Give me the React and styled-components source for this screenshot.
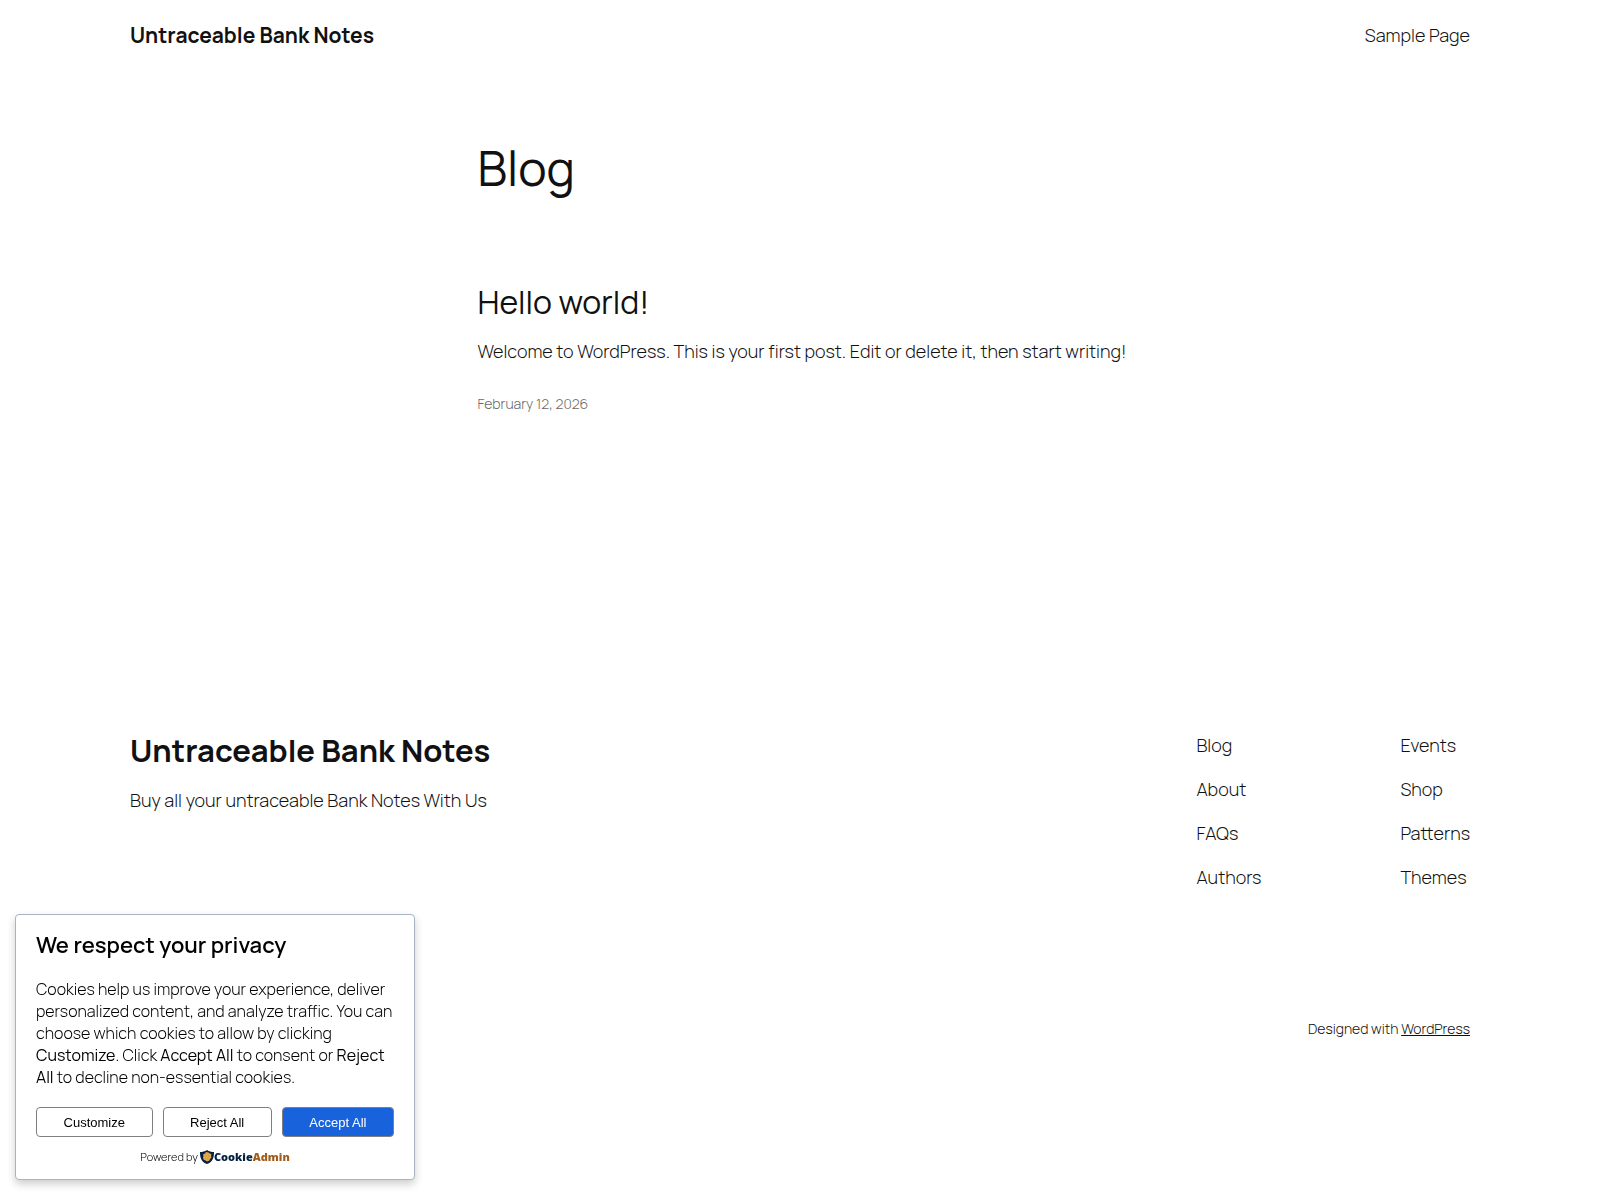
import styled, { createGlobalStyle } from 'styled-components';

const GlobalStyle = createGlobalStyle`
  * {
    box-sizing: border-box;
  }

  body {
    margin: 0;
    background: #fff;
    color: #111;
    font-family: Manrope, Inter, sans-serif;
    font-size: 18px;
    font-weight: 300;
    line-height: 26px;
  }

  h1, h2, h3, p, ul {
    margin: 0;
    padding: 0;
  }

  a {
    color: inherit;
    text-decoration: none;
  }
`;

const Wide = styled.div`
  width: 100%;
  max-width: 1440px;
  margin: 0 auto;
  padding: 0 50px;
`;

const HeaderRow = styled(Wide)`
  display: flex;
  align-items: center;
  justify-content: space-between;
  height: 70px;
`;

const SiteTitle = styled.p`
  font-size: 21px;
  font-weight: 700;
`;

const Main = styled.main`
  width: 100%;
  max-width: 645px;
  margin: 0 auto;
  padding: 70px 0 315px;
`;

const PageTitle = styled.h1`
  font-size: 48px;
  font-weight: 400;
  line-height: 56px;
`;

const Post = styled.article`
  padding-top: 88px;
`;

const PostTitle = styled.h2`
  font-size: 32px;
  font-weight: 400;
  line-height: 36px;
`;

const Excerpt = styled.p`
  margin: 18px -10px 0 0;
`;

const PostDate = styled.a`
  display: block;
  margin-top: 27px;
  color: #686868;
  font-size: 14px;
`;

const Footer = styled(Wide)`
  padding-bottom: 158px;
`;

const FooterTop = styled.div`
  display: flex;
  justify-content: space-between;
`;

const FooterTitle = styled.p`
  font-size: 31px;
  font-weight: 700;
  line-height: 36px;
`;

const Tagline = styled.p`
  margin-top: 19px;
`;

const FooterNav = styled.nav`
  display: grid;
  grid-template-columns: 124px auto;
  column-gap: 80px;
`;

const NavList = styled.ul`
  display: flex;
  flex-direction: column;
  gap: 18px;
  list-style: none;
`;

const Credit = styled.p`
  margin-top: 126px;
  font-size: 14px;
  text-align: right;

  a {
    text-decoration: underline;
  }
`;

const Consent = styled.section`
  position: fixed;
  left: 15px;
  bottom: 20px;
  width: 400px;
  padding: 16px 20px 11px;
  background: #fff;
  border: 1px solid #a8b4c4;
  border-radius: 4px;
  box-shadow: 0 4px 8px rgba(0, 0, 0, 0.2);
  color: #000;
`;

const ConsentTitle = styled.h3`
  font-size: 22px;
  font-weight: 600;
  line-height: 28px;
`;

const ConsentText = styled.p`
  margin-top: 19px;
  font-size: 16px;
  line-height: 22px;

  b {
    font-weight: 400;
  }
`;

const Actions = styled.div`
  display: flex;
  justify-content: space-between;
  gap: 10px;
  margin-top: 19px;
`;

const Button = styled.button`
  flex: 1 1 auto;
  height: 30px;
  padding: 0 25px;
  background: ${(props) => (props.$primary ? '#1863dc' : '#fff')};
  border: 1px solid #808080;
  border-radius: 4px;
  color: ${(props) => (props.$primary ? '#fff' : '#000')};
  font-family: 'Liberation Sans', Arial, sans-serif;
  font-size: 13px;
  white-space: nowrap;
`;

const Powered = styled.div`
  display: flex;
  align-items: center;
  justify-content: center;
  gap: 2px;
  margin-top: 9px;
  font-size: 11px;
  line-height: 22px;
`;

const Brand = styled.a`
  display: flex;
  align-items: center;
  color: #04213f;
  font-family: 'Open Sans', sans-serif;
  font-size: 11px;
  font-weight: 800;

  span {
    color: #a15c1c;
  }
`;

const Shield = () => (
  <svg width="14" height="14" viewBox="0 0 28 28" aria-hidden="true">
    <path d="M14 0C10 3 5 4 0 4c0 12 3 20 14 24C25 24 28 16 28 4 23 4 18 3 14 0z" fill="#04213f" />
    <path
      d="M12 4l5 1 2 2 4 1-1 4 1 3-3 3-1 3-5 2-3-2-4-2-1-4 1-3-1-3 4-2z"
      fill="#e5a650"
    />
    <g fill="#c98a3c">
      <circle cx="12" cy="10" r="1" />
      <circle cx="17" cy="12" r="1" />
      <circle cx="11" cy="16" r="1" />
      <circle cx="16" cy="18" r="1" />
    </g>
  </svg>
);

const footerLinks = [
  ['Blog', 'About', 'FAQs', 'Authors'],
  ['Events', 'Shop', 'Patterns', 'Themes'],
];

export default function App() {
  return (
    <>
      <GlobalStyle />
      <HeaderRow as="header">
        <SiteTitle>
          <a href="#home">Untraceable Bank Notes</a>
        </SiteTitle>
        <nav>
          <a href="#sample-page">Sample Page</a>
        </nav>
      </HeaderRow>

      <Main>
        <PageTitle>Blog</PageTitle>
        <Post>
          <PostTitle>
            <a href="#hello-world">Hello world!</a>
          </PostTitle>
          <Excerpt>
            Welcome to WordPress. This is your first post. Edit or delete it, then start writing!
          </Excerpt>
          <PostDate href="#hello-world">February 12, 2026</PostDate>
        </Post>
      </Main>

      <Footer as="footer">
        <FooterTop>
          <div>
            <FooterTitle>
              <a href="#home">Untraceable Bank Notes</a>
            </FooterTitle>
            <Tagline>Buy all your untraceable Bank Notes With Us</Tagline>
          </div>
          <FooterNav>
            {footerLinks.map((links) => (
              <NavList key={links[0]}>
                {links.map((link) => (
                  <li key={link}>
                    <a href="#footer">{link}</a>
                  </li>
                ))}
              </NavList>
            ))}
          </FooterNav>
        </FooterTop>
        <Credit>
          Designed with <a href="#wordpress">WordPress</a>
        </Credit>
      </Footer>

      <Consent aria-labelledby="consent-title">
        <ConsentTitle id="consent-title">We respect your privacy</ConsentTitle>
        <ConsentText>
          Cookies help us improve your experience, deliver personalized content, and analyze
          traffic. You can choose which cookies to allow by clicking <b>Customize</b>. Click{' '}
          <b>Accept All</b> to consent or <b>Reject All</b> to decline non-essential cookies.
        </ConsentText>
        <Actions>
          <Button type="button">Customize</Button>
          <Button type="button">Reject All</Button>
          <Button type="button" $primary>Accept All</Button>
        </Actions>
        <Powered>
          Powered by
          <Brand href="#cookieadmin">
            <Shield />
            <div>Cookie<span>Admin</span></div>
          </Brand>
        </Powered>
      </Consent>
    </>
  );
}
